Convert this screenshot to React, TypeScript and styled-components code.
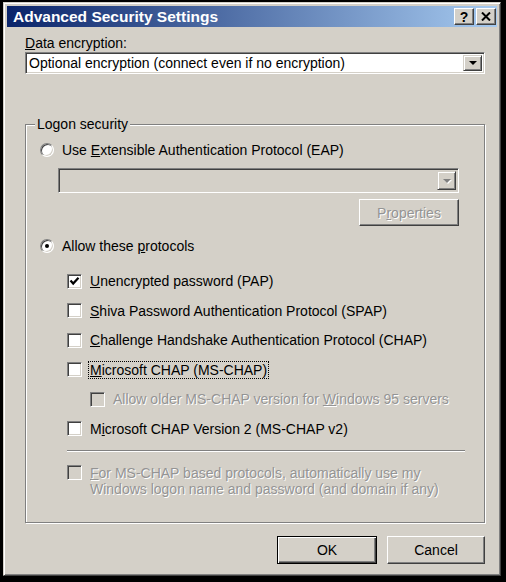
import React from "react";
import styled, { createGlobalStyle, css } from "styled-components";

const GlobalStyle = createGlobalStyle`
  html, body { margin: 0; padding: 0; background: #000; }
  body { font-family: "Liberation Sans", Arial, sans-serif; font-size: 14px; color: #000; }
  * { box-sizing: border-box; }
`;

const Window = styled.div`
  margin: 2px 0 0 3px;
  width: 498px;
  height: 574px;
  background: #d4d0c8;
  border: 1px solid;
  border-color: #d4d0c8 #404040 #404040 #d4d0c8;
  box-shadow: inset 1px 1px 0 #fff, inset -1px -1px 0 #808080;
  padding: 3px;
  display: flex;
  flex-direction: column;
`;

const TitleBar = styled.div`
  height: 21px;
  display: flex;
  align-items: center;
  padding: 0 1px 0 6px;
  background: linear-gradient(to right, #0a246a, #a6caf0);
  color: #fff;
`;

const TitleText = styled.div`
  flex: 1;
  font-weight: bold;
  font-size: 15.5px;
  line-height: 21px;
  white-space: nowrap;
`;

const TitleButtons = styled.div`
  display: flex;
  gap: 2px;
`;

const TitleButton = styled.div`
  width: 20px;
  height: 17px;
  background: #d4d0c8;
  border: 1px solid;
  border-color: #fff #404040 #404040 #fff;
  box-shadow: inset -1px -1px 0 #808080;
  display: flex;
  align-items: center;
  justify-content: center;
  color: #000;
  font-weight: bold;
  font-size: 14px;
  line-height: 14px;
`;

const Body = styled.div`
  flex: 1;
  display: flex;
  flex-direction: column;
  padding: 8px 12px 0 18px;
`;

const Label = styled.div`
  line-height: 16px;
  white-space: nowrap;
`;

const Combo = styled.div<{ $disabled?: boolean; $mt: number; $height: number }>`
  margin-top: ${(p) => p.$mt}px;
  height: ${(p) => p.$height}px;
  display: flex;
  align-items: stretch;
  background: ${(p) => (p.$disabled ? "#d4d0c8" : "#fff")};
  border: 1px solid;
  border-color: #808080 #fff #fff #808080;
  box-shadow: inset 1px 1px 0 #404040, inset -1px -1px 0 #d4d0c8;
  padding: 2px;
`;

const ComboText = styled.div`
  flex: 1;
  line-height: 16px;
  padding-left: 1px;
  display: flex;
  align-items: center;
  white-space: nowrap;
`;

const DropButton = styled.div`
  width: 19px;
  background: #d4d0c8;
  border: 1px solid;
  border-color: #d4d0c8 #404040 #404040 #d4d0c8;
  box-shadow: inset 1px 1px 0 #fff, inset -1px -1px 0 #808080;
  display: flex;
  align-items: center;
  justify-content: center;
`;

const GroupBox = styled.fieldset`
  margin: 42px 0 0 0;
  min-width: 0;
  border: 1px solid #808080;
  box-shadow: 1px 1px 0 #fff, inset 1px 1px 0 #fff;
  padding: 0 12px 25px 14px;
  display: flex;
  flex-direction: column;
`;

const Legend = styled.legend`
  line-height: 16px;
  padding: 0 2px;
  margin-left: -5px;
  background: #d4d0c8;
`;

const Option = styled.div<{ $indent: number; $mt: number; $top?: boolean }>`
  display: flex;
  align-items: ${(p) => (p.$top ? "flex-start" : "center")};
  gap: 8px;
  min-height: 18px;
  margin-left: ${(p) => p.$indent}px;
  margin-top: ${(p) => p.$mt}px;
  white-space: nowrap;
`;

const disabledText = css`
  color: #949494;
  text-shadow: 1px 1px 0 #fff;
`;

const Text = styled.span<{ $disabled?: boolean }>`
  line-height: 16px;
  ${(p) => p.$disabled && disabledText}
`;

const FocusText = styled.span`
  line-height: 16px;
  outline: 1px dotted #000;
  outline-offset: 0;
  padding: 0 1px;
  margin-left: -1px;
`;

const RadioBox = styled.span`
  width: 14px;
  height: 14px;
  border-radius: 50%;
  border: 1px solid;
  border-color: #808080 #fff #fff #808080;
  box-shadow: inset 1px 1px 0 #404040, inset -1px -1px 0 #d4d0c8;
  background: #fff;
  display: flex;
  align-items: center;
  justify-content: center;
  flex: none;
`;

const RadioDot = styled.span`
  width: 4px;
  height: 4px;
  border-radius: 50%;
  background: #000;
`;

const CheckBox = styled.span<{ $disabled?: boolean }>`
  width: 15px;
  height: 15px;
  border: 1px solid;
  border-color: #808080 #fff #fff #808080;
  box-shadow: inset 1px 1px 0 #404040, inset -1px -1px 0 #d4d0c8;
  background: ${(p) => (p.$disabled ? "#d4d0c8" : "#fff")};
  display: flex;
  align-items: center;
  justify-content: center;
  flex: none;
`;

const DisabledBlock = styled.div`
  margin-left: 18px;
  margin-top: 9px;
  width: 401px;
  display: flex;
  flex-direction: column;
`;

const Button = styled.div<{
  $default?: boolean;
  $disabled?: boolean;
  $alignEnd?: boolean;
  $width: number;
  $height: number;
  $mt?: number;
}>`
  width: ${(p) => p.$width}px;
  height: ${(p) => p.$height}px;
  margin-top: ${(p) => p.$mt ?? 0}px;
  align-self: ${(p) => (p.$alignEnd ? "flex-end" : "auto")};
  background: #d4d0c8;
  display: flex;
  align-items: center;
  justify-content: center;
  line-height: 16px;
  ${(p) =>
    p.$default
      ? css`
          border: 1px solid #000;
          box-shadow: inset 1px 1px 0 #fff, inset -1px -1px 0 #404040, inset -2px -2px 0 #808080;
        `
      : css`
          border: 1px solid;
          border-color: #fff #404040 #404040 #fff;
          box-shadow: inset -1px -1px 0 #808080;
        `}
  ${(p) => p.$disabled && disabledText}
`;

const Separator = styled.div`
  margin: 12px 0 0 27px;
  width: 398px;
  height: 2px;
  border-top: 1px solid #808080;
  border-bottom: 1px solid #fff;
`;

const Column = styled.div`
  display: flex;
  flex-direction: column;
`;

const ButtonRow = styled.div`
  display: flex;
  justify-content: flex-end;
  gap: 10px;
  margin-top: 13px;
`;

const Arrow = ({ disabled }: { disabled?: boolean }) => (
  <svg width="10" height="6" viewBox="0 0 10 6">
    {disabled && <path d="M2 2h8L6 6z" fill="#fff" />}
    <path d="M1 1h8L5 5z" fill={disabled ? "#808080" : "#000"} />
  </svg>
);

const Check = () => (
  <svg width="11" height="11" viewBox="0 0 11 11">
    <path d="M1.5 4.5 L4.2 7.5 L9.5 1.8" fill="none" stroke="#000" strokeWidth="2.2" />
  </svg>
);

const CloseGlyph = () => (
  <svg width="10" height="9" viewBox="0 0 10 9">
    <path d="M1 0.5 L9 8.5 M9 0.5 L1 8.5" stroke="#000" strokeWidth="2" />
  </svg>
);

const Radio = ({ checked }: { checked?: boolean }) => (
  <RadioBox>{checked && <RadioDot />}</RadioBox>
);

export default function App() {
  return (
    <>
      <GlobalStyle />
      <Window>
        <TitleBar>
          <TitleText>Advanced Security Settings</TitleText>
          <TitleButtons>
            <TitleButton>?</TitleButton>
            <TitleButton>
              <CloseGlyph />
            </TitleButton>
          </TitleButtons>
        </TitleBar>
        <Body>
          <Label>
            <u>D</u>ata encryption:
          </Label>
          <Combo $mt={1} $height={22}>
            <ComboText>Optional encryption (connect even if no encryption)</ComboText>
            <DropButton>
              <Arrow />
            </DropButton>
          </Combo>

          <GroupBox>
            <Legend>Logon security</Legend>
            <Option $indent={0} $mt={9}>
              <Radio />
              <Text>
                Use <u>E</u>xtensible Authentication Protocol (EAP)
              </Text>
            </Option>
            <DisabledBlock>
              <Combo $disabled $mt={0} $height={25}>
                <ComboText />
                <DropButton>
                  <Arrow disabled />
                </DropButton>
              </Combo>
              <Button $disabled $alignEnd $width={100} $height={27} $mt={6}>
                <span>
                  P<u>r</u>operties
                </span>
              </Button>
            </DisabledBlock>
            <Option $indent={0} $mt={11}>
              <Radio checked />
              <Text>
                Allow these <u>p</u>rotocols
              </Text>
            </Option>
            <Option $indent={27} $mt={17}>
              <CheckBox>
                <Check />
              </CheckBox>
              <Text>
                <u>U</u>nencrypted password (PAP)
              </Text>
            </Option>
            <Option $indent={27} $mt={11.6}>
              <CheckBox />
              <Text>
                <u>S</u>hiva Password Authentication Protocol (SPAP)
              </Text>
            </Option>
            <Option $indent={27} $mt={11.6}>
              <CheckBox />
              <Text>
                <u>C</u>hallenge Handshake Authentication Protocol (CHAP)
              </Text>
            </Option>
            <Option $indent={27} $mt={11.6}>
              <CheckBox />
              <FocusText>
                <u>M</u>icrosoft CHAP (MS-CHAP)
              </FocusText>
            </Option>
            <Option $indent={50} $mt={11.6}>
              <CheckBox $disabled />
              <Text $disabled>
                Allow older MS-CHAP version for <u>W</u>indows 95 servers
              </Text>
            </Option>
            <Option $indent={27} $mt={11.6}>
              <CheckBox />
              <Text>
                M<u>i</u>crosoft CHAP Version 2 (MS-CHAP v2)
              </Text>
            </Option>
            <Separator />
            <Option $indent={27} $mt={13} $top>
              <CheckBox $disabled />
              <Column>
                <Text $disabled>
                  <u>F</u>or MS-CHAP based protocols, automatically use my
                </Text>
                <Text $disabled>Windows logon name and password (and domain if any)</Text>
              </Column>
            </Option>
          </GroupBox>

          <ButtonRow>
            <Button $default $width={100} $height={28}>
              OK
            </Button>
            <Button $width={98} $height={28}>
              Cancel
            </Button>
          </ButtonRow>
        </Body>
      </Window>
    </>
  );
}
